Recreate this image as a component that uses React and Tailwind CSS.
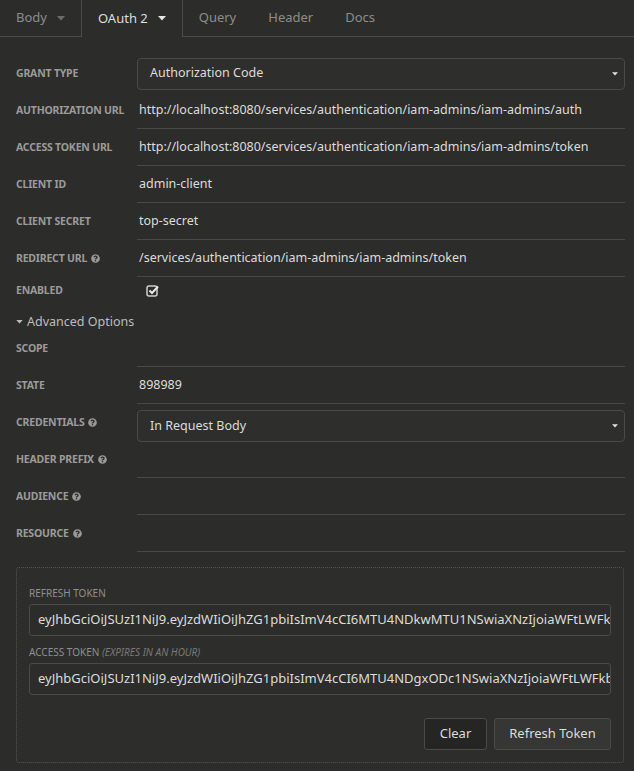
import { FaQuestionCircle } from 'react-icons/fa';

const font = { fontFamily: '"Noto Sans", "Open Sans", sans-serif' };

function Caret({ className = '', w = 8, h = 5 }) {
  return (
    <svg width={w} height={h} viewBox="0 0 8 5" className={className}>
      <path d="M0 0 H8 L4 4.5 Z" fill="currentColor" />
    </svg>
  );
}

function Help() {
  return <FaQuestionCircle className="inline-block ml-[4px] text-[9px] text-[#9a9a9a] align-[-1px]" />;
}

function Label({ children, help }) {
  return (
    <div className="text-[10.5px] font-bold uppercase text-[#9b9b9b] tracking-[-0.2px] whitespace-nowrap">
      {children}
      {help && <Help />}
    </div>
  );
}

function Row({ label, help, children }) {
  return (
    <div className="grid grid-cols-[121px_1fr] h-[37px] items-center">
      <Label help={help}>{label}</Label>
      {children}
    </div>
  );
}

function TextField({ label, help, value }) {
  return (
    <Row label={label} help={help}>
      <div className="h-[37px] border-b border-[#484846] flex items-center pl-[2px] text-[12.5px] text-[#dcdcdc] whitespace-nowrap overflow-hidden">
        {value}
      </div>
    </Row>
  );
}

function SelectField({ label, help, value, offset = 'mt-0' }) {
  return (
    <Row label={label} help={help}>
      <div className={`h-[32px] ${offset} rounded-[4px] border border-[#4a4a48] bg-[#2e2e2c] flex items-center justify-between pl-[12px] pr-[6px] text-[12.5px] text-[#dcdcdc]`}>
        <span>{value}</span>
        <Caret w={6} h={4} className="text-[#e0e0e0]" />
      </div>
    </Row>
  );
}

function Tab({ children, active, caret }) {
  return (
    <div
      className={
        active
          ? 'h-[37px] flex items-center gap-[10px] px-[16px] text-[13px] text-[#dedede] border-x border-[#4a4a48]'
          : 'h-[37px] flex items-center gap-[10px] px-[16px] text-[13px] text-[#8c8c8c] border-b border-[#4a4a48]'
      }
    >
      <span>{children}</span>
      {caret && <Caret className={active ? 'text-[#e6e6e6]' : 'text-[#6c6c6c]'} />}
    </div>
  );
}

function TokenInput({ value }) {
  return (
    <div className="h-[32px] rounded-[3px] border border-[#4a4a48] bg-[#2c2c2a] flex items-center px-[8px] text-[13px] text-[#dcdcdc] whitespace-nowrap overflow-hidden">
      {value}
    </div>
  );
}

export default function App() {
  return (
    <div className="w-[634px] h-[771px] bg-[#2c2c2a] overflow-hidden" style={font}>
      <div className="flex">
        <Tab caret>Body</Tab>
        <Tab active caret>OAuth 2</Tab>
        <Tab>Query</Tab>
        <Tab>Header</Tab>
        <Tab>Docs</Tab>
        <div className="flex-1 border-b border-[#4a4a48]" />
      </div>

      <div className="pl-[16px] pr-[9px] pt-[18px]">
        <SelectField label="Grant Type" value="Authorization Code" />
        <TextField label="Authorization URL" value="http://localhost:8080/services/authentication/iam-admins/iam-admins/auth" />
        <TextField label="Access Token URL" value="http://localhost:8080/services/authentication/iam-admins/iam-admins/token" />
        <TextField label="Client ID" value="admin-client" />
        <TextField label="Client Secret" value="top-secret" />
        <TextField label="Redirect URL" help value="/services/authentication/iam-admins/iam-admins/token" />

        <div className="grid grid-cols-[121px_1fr] h-[27px] items-center">
          <Label>Enabled</Label>
          <div className="pl-[9px]">
            <svg width="14" height="13" viewBox="0 0 14 13">
              <rect x="1" y="2" width="10" height="10" rx="2" fill="none" stroke="#cfcfcf" strokeWidth="1.5" />
              <path d="M3.5 6.5 L6 9 L12 2.5" fill="none" stroke="#e8e8e8" strokeWidth="2" />
            </svg>
          </div>
        </div>

        <div className="h-[26px] flex items-end">
          <div className="flex items-center gap-[4px] text-[12.5px] text-[#bdbdbd] leading-[17px]">
            <Caret w={7} h={4} className="text-[#bdbdbd]" />
            <span>Advanced Options</span>
          </div>
        </div>

        <TextField label="Scope" value="" />
        <TextField label="State" value="898989" />
        <SelectField label="Credentials" help value="In Request Body" offset="mt-[6px]" />
        <TextField label="Header Prefix" help value="" />
        <TextField label="Audience" help value="" />
        <TextField label="Resource" help value="" />
      </div>

      <div className="ml-[16px] mr-[10px] mt-[15px] rounded-[3px] border border-dotted border-[#555553] bg-[#2d2d2b] px-[12px] pt-[18px] pb-[12px]">
        <div className="text-[10px] leading-[14px] uppercase text-[#8f8f8f] mb-[4px]">Refresh Token</div>
        <TokenInput value="eyJhbGciOiJSUzI1NiJ9.eyJzdWIiOiJhZG1pbiIsImV4cCI6MTU4NDkwMTU1NSwiaXNzIjoiaWFtLWFkbWlucyJ9" />
        <div className="text-[10px] leading-[14px] uppercase text-[#8f8f8f] mt-[9px] mb-[4px]">
          Access Token <i className="text-[#7a7a7a]">(expires in an hour)</i>
        </div>
        <TokenInput value="eyJhbGciOiJSUzI1NiJ9.eyJzdWIiOiJhZG1pbiIsImV4cCI6MTU4NDgxODc1NSwiaXNzIjoiaWFtLWFkbWlucyJ9" />
        <div className="flex justify-end gap-[7px] mt-[23px]">
          <button className="h-[32px] w-[63px] rounded-[3px] border border-[#4a4a48] bg-[#252523] text-[13px] text-[#dcdcdc]">
            Clear
          </button>
          <button className="h-[32px] w-[117px] rounded-[3px] border border-[#4a4a48] bg-[#363634] text-[13px] text-[#dcdcdc]">
            Refresh Token
          </button>
        </div>
      </div>
    </div>
  );
}
